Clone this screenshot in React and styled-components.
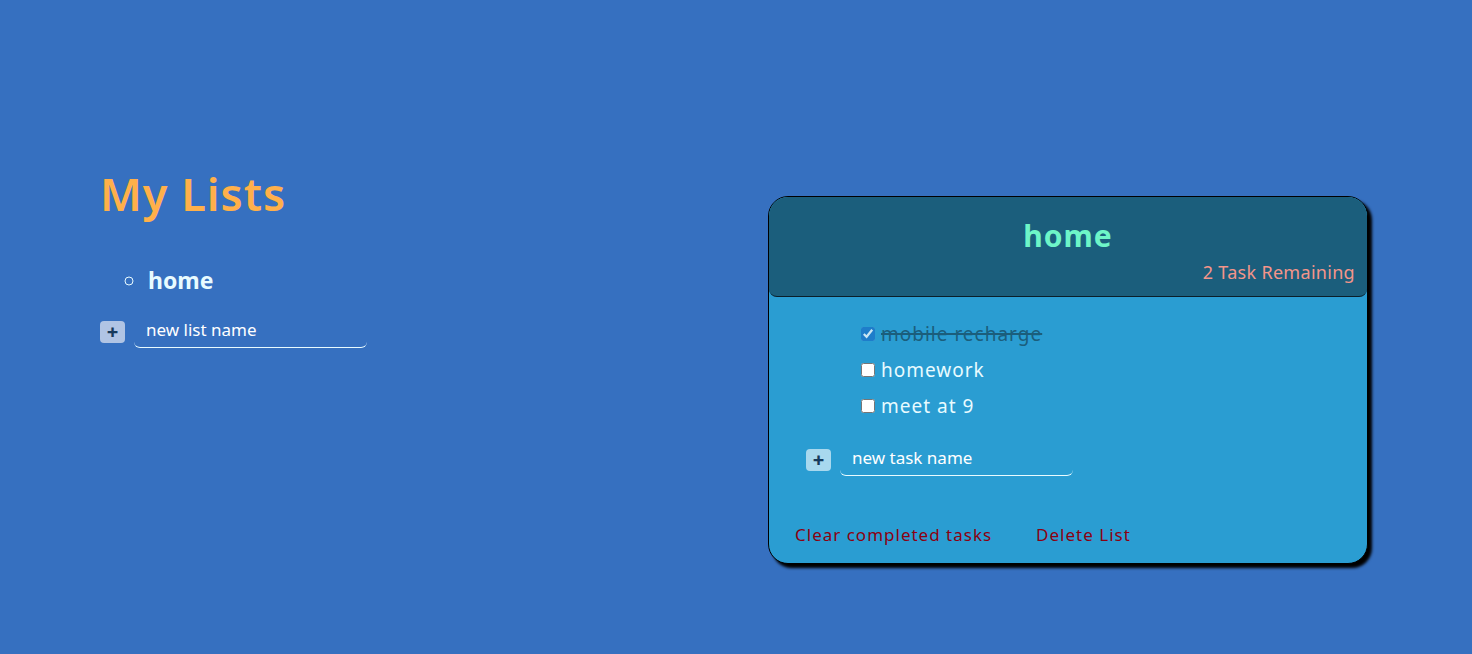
import React from 'react';
import styled, { createGlobalStyle } from 'styled-components';

const GlobalStyle = createGlobalStyle`
  html, body {
    margin: 0;
    padding: 0;
    background: #3670c0;
    font-family: "Noto Sans", "Open Sans", sans-serif;
  }
`;

const Page = styled.div`
  display: grid;
  grid-template-columns: 1fr 600px;
  padding: 0 104px 0 100px;
  height: 654px;
  box-sizing: border-box;
`;

const Lists = styled.div`
  padding-top: 163px;
`;

const Title = styled.h1`
  margin: 0;
  color: #ffb04a;
  font-size: 45px;
  font-weight: 600;
  letter-spacing: 1px;
`;

const ListNames = styled.ul`
  margin: 40px 0 20px;
  padding-left: 48px;
  list-style: circle;
  color: #e8fbff;
  font-size: 23px;
  font-weight: 700;
`;

const NewForm = styled.form`
  display: flex;
  align-items: center;
  gap: 9px;
  margin-left: ${p => p.indent || 0}px;
  margin-top: ${p => p.top || 0}px;
`;

const AddButton = styled.button`
  width: 25px;
  height: 22px;
  padding: 0;
  border: none;
  border-radius: 4px;
  background: ${p => p.light};
  color: #173a5c;
  font-size: 20px;
  font-weight: 800;
  line-height: 22px;
  font-family: inherit;
`;

const NameInput = styled.input`
  width: 233px;
  box-sizing: border-box;
  padding: 2px 12px 6px;
  border: none;
  border-bottom: 1px solid #e8fbff;
  border-radius: 0 0 6px 6px;
  background: transparent;
  color: #fff;
  font-family: inherit;
  font-size: 17px;
  &::placeholder { color: #fff; opacity: 1; }
`;

const Card = styled.div`
  margin-top: 196px;
  align-self: start;
  border: 1px solid #000;
  border-radius: 20px;
  background: #2a9dd2;
  box-shadow: 4px 4px 3px #000;
  overflow: hidden;
`;

const Header = styled.div`
  background: #1b5e7c;
  border-bottom: 1px solid #0a1f2a;
  border-radius: 0 0 8px 8px;
  padding: 18px 12px 12px;
  text-align: center;
`;

const CardTitle = styled.h2`
  margin: 0;
  color: #6ef5c8;
  font-size: 30px;
  font-weight: 700;
  letter-spacing: 1px;
`;

const Remaining = styled.div`
  margin-top: 4px;
  text-align: right;
  color: #f4958a;
  font-size: 18px;
  letter-spacing: 0.3px;
`;

const Body = styled.div`
  padding: 25px 0 0;
`;

const Tasks = styled.div`
  padding-left: 92px;
  display: flex;
  flex-direction: column;
  gap: 12px;
`;

const Task = styled.label`
  display: flex;
  align-items: center;
  gap: 6px;
  font-size: 19px;
  letter-spacing: 1px;
  line-height: 24px;
  color: ${p => (p.done ? '#1b5e7c' : '#e8fbff')};
  text-decoration: ${p => (p.done ? 'line-through' : 'none')};
  text-decoration-thickness: 2px;
  input {
    margin: 0;
    width: 14px;
    height: 14px;
    accent-color: #1a73c8;
    opacity: ${p => (p.done ? 0.75 : 1)};
  }
`;

const Footer = styled.div`
  display: flex;
  gap: 44px;
  padding: 47px 26px 17px;
`;

const FooterLink = styled.button`
  border: none;
  background: none;
  padding: 0;
  color: #8b0010;
  font-family: inherit;
  font-size: 17px;
  letter-spacing: 1px;
`;

export default function App() {
  return (
    <>
      <GlobalStyle />
      <Page>
        <Lists>
          <Title>My Lists</Title>
          <ListNames>
            <li>home</li>
          </ListNames>
          <NewForm onSubmit={e => e.preventDefault()}>
            <AddButton light="#b0c4e4">+</AddButton>
            <NameInput placeholder="new list name" />
          </NewForm>
        </Lists>
        <Card>
          <Header>
            <CardTitle>home</CardTitle>
            <Remaining>2 Task Remaining</Remaining>
          </Header>
          <Body>
            <Tasks>
              <Task done><input type="checkbox" defaultChecked />mobile recharge</Task>
              <Task><input type="checkbox" />homework</Task>
              <Task><input type="checkbox" />meet at 9</Task>
            </Tasks>
            <NewForm indent={37} top={26} onSubmit={e => e.preventDefault()}>
              <AddButton light="#a8d8ee">+</AddButton>
              <NameInput placeholder="new task name" />
            </NewForm>
            <Footer>
              <FooterLink>Clear completed tasks</FooterLink>
              <FooterLink>Delete List</FooterLink>
            </Footer>
          </Body>
        </Card>
      </Page>
    </>
  );
}
